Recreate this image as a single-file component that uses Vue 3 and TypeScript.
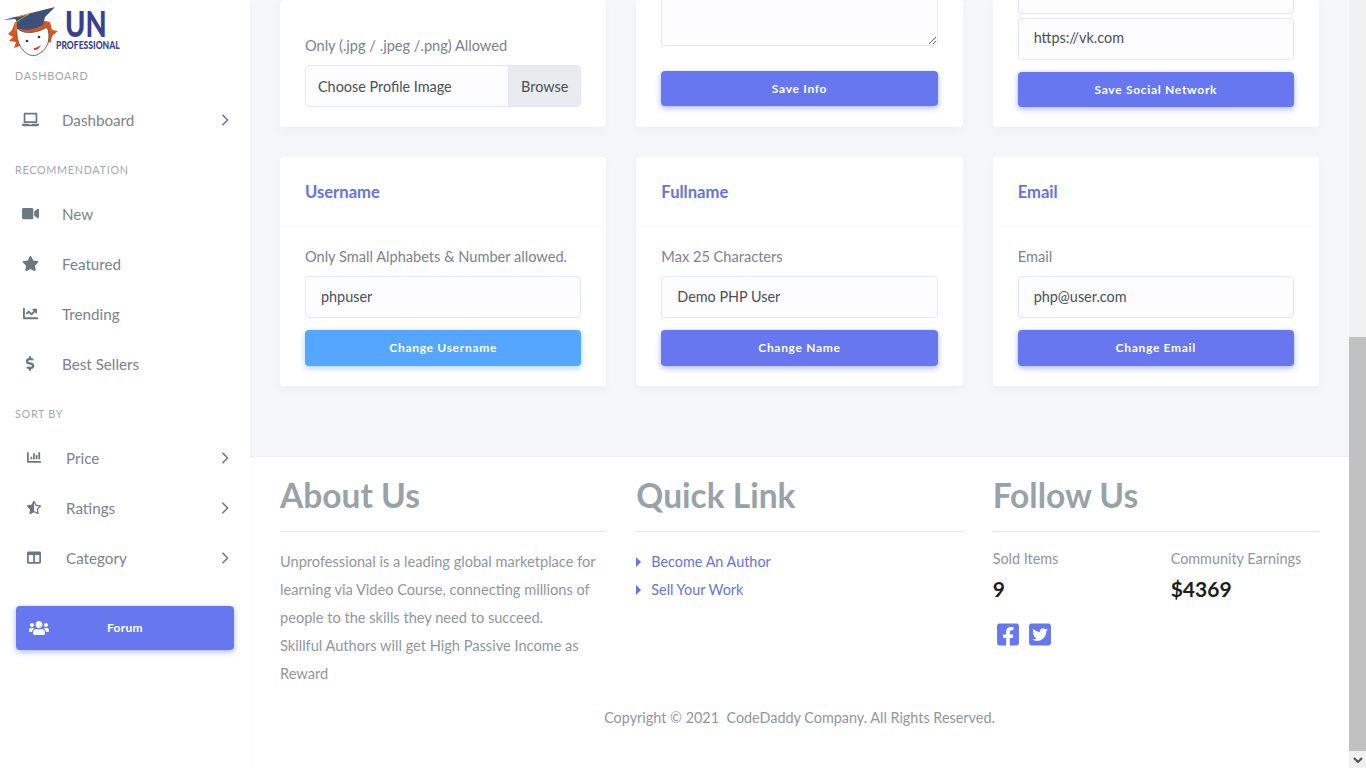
<template>
  <div class="page">
    <!-- sidebar -->
    <aside class="sidebar">
      <div class="logo">
        <svg class="logo-mascot" viewBox="0 0 62 58" width="62" height="58">
          <path d="M8 34 L12 30 L15 22 L40 20 L50 22 L52 30 L58 31 L52 36 L51 42 L44 44 L20 46 L14 48 L16 42 L9 41 L13 37Z" fill="#d9541e" />
          <path d="M17 28 C24 36 40 32 47 27 C51 36 49 48 40 53 C35 57 29 56 25 52 C19 47 16 38 17 28Z" fill="#fff" stroke="#5b4a44" stroke-width="0.8" />
          <path d="M3 20 L55 7 L45 17 L43 25 C34 30 24 31 17 28 L16 20 L15 19Z" fill="#3d5078" />
          <path d="M17 17 L29 14 L16 22 L16 31" fill="none" stroke="#d9b83a" stroke-width="0.8" />
          <circle cx="27" cy="41" r="1.3" fill="#333" />
          <circle cx="39" cy="37" r="1.3" fill="#333" />
          <path d="M34 50 C37 50 40 48 41 45 C39 46 36 48 34 48Z" fill="#c9402a" />
        </svg>
        <div class="logo-text">
          <span class="logo-un">UN</span>
          <span class="logo-pro">PROFESSIONAL</span>
        </div>
      </div>

      <div class="nav-head first">DASHBOARD</div>
      <a class="nav-item"><svg class="ico" viewBox="0 0 640 512"><path :d="icons.laptop" /></svg><span>Dashboard</span><svg class="chev" viewBox="0 0 8 14"><path d="M1 1l6 6-6 6" /></svg></a>

      <div class="nav-head">RECOMMENDATION</div>
      <a class="nav-item"><svg class="ico" viewBox="0 0 576 512"><path :d="icons.video" /></svg><span>New</span></a>
      <a class="nav-item"><svg class="ico" viewBox="0 0 576 512"><path :d="icons.star" /></svg><span>Featured</span></a>
      <a class="nav-item"><svg class="ico" viewBox="0 0 512 512"><path :d="icons.trend" /></svg><span>Trending</span></a>
      <a class="nav-item"><svg class="ico" viewBox="0 0 320 512"><path :d="icons.dollar" /></svg><span>Best Sellers</span></a>

      <div class="nav-head">SORT BY</div>
      <a class="nav-item sub"><svg class="ico" viewBox="0 0 512 512"><path :d="icons.bars" /></svg><span>Price</span><svg class="chev" viewBox="0 0 8 14"><path d="M1 1l6 6-6 6" /></svg></a>
      <a class="nav-item sub"><svg class="ico" viewBox="0 0 536 512"><path :d="icons.starHalf" /></svg><span>Ratings</span><svg class="chev" viewBox="0 0 8 14"><path d="M1 1l6 6-6 6" /></svg></a>
      <a class="nav-item sub"><svg class="ico" viewBox="0 0 512 512"><path :d="icons.columns" /></svg><span>Category</span><svg class="chev" viewBox="0 0 8 14"><path d="M1 1l6 6-6 6" /></svg></a>

      <a class="forum"><svg viewBox="0 0 640 512" width="20" height="16"><path :d="icons.users" /></svg><span>Forum</span></a>
    </aside>

    <main class="main">
      <section class="cards top">
        <div class="card">
          <div class="card-body">
            <label>Only (.jpg / .jpeg /.png) Allowed</label>
            <div class="file-input"><span>Choose Profile Image</span><b>Browse</b></div>
          </div>
        </div>
        <div class="card">
          <div class="card-body">
            <textarea class="area"></textarea>
            <button class="btn save-info">Save Info</button>
          </div>
        </div>
        <div class="card">
          <div class="card-body">
            <input class="field tight" />
            <input class="field" value="https://vk.com" />
            <button class="btn">Save Social Network</button>
          </div>
        </div>
      </section>

      <section class="cards">
        <div v-for="c in forms" :key="c.title" class="card">
          <h3 class="card-title">{{ c.title }}</h3>
          <div class="card-body">
            <label>{{ c.label }}</label>
            <input class="field" :value="c.value" />
            <button class="btn" :class="{ light: c.light }">{{ c.action }}</button>
          </div>
        </div>
      </section>

      <footer class="footer">
        <div class="foot-cols">
          <div>
            <h2>About Us</h2>
            <p>Unprofessional is a leading global marketplace for learning via Video Course, connecting millions of people to the skills they need to succeed.<br />Skillful Authors will get High Passive Income as Reward</p>
          </div>
          <div>
            <h2>Quick Link</h2>
            <ul>
              <li>Become An Author</li>
              <li>Sell Your Work</li>
            </ul>
          </div>
          <div>
            <h2>Follow Us</h2>
            <div class="stats">
              <div><small>Sold Items</small><strong>9</strong></div>
              <div><small>Community Earnings</small><strong>$4369</strong></div>
            </div>
            <div class="social-links">
              <svg viewBox="0 0 448 512" width="22" height="25"><path :d="icons.fb" /></svg>
              <svg viewBox="0 0 448 512" width="22" height="25"><path :d="icons.tw" /></svg>
            </div>
          </div>
        </div>
        <div class="copy">Copyright © 2021&nbsp; CodeDaddy Company. All Rights Reserved.</div>
      </footer>
    </main>

    <div class="scrollbar">
      <div class="track"></div>
      <div class="thumb"></div>
      <div class="arrow"><svg viewBox="0 0 10 6" width="10" height="6"><path d="M1 1l4 4 4-4" /></svg></div>
    </div>
  </div>
</template>

<script setup lang="ts">
interface FormCard {
  title: string
  label: string
  value: string
  action: string
  light?: boolean
}

const forms: FormCard[] = [
  { title: 'Username', label: 'Only Small Alphabets & Number allowed.', value: 'phpuser', action: 'Change Username', light: true },
  { title: 'Fullname', label: 'Max 25 Characters', value: 'Demo PHP User', action: 'Change Name' },
  { title: 'Email', label: 'Email', value: 'php@user.com', action: 'Change Email' }
]

const icons = {
  laptop: 'M624 416H381.54c-.74 19.81-14.71 32-32.74 32H288c-18.69 0-33.02-17.47-32.77-32H16c-8.8 0-16 7.2-16 16v16c0 35.2 28.8 64 64 64h512c35.2 0 64-28.8 64-64v-16c0-8.8-7.2-16-16-16zM576 48c0-26.4-21.6-48-48-48H112C85.6 0 64 21.6 64 48v336h512V48zm-64 272H128V64h384v256z',
  video: 'M336.2 64H47.8C21.4 64 0 85.4 0 111.8v288.4C0 426.6 21.4 448 47.8 448h288.4c26.4 0 47.8-21.4 47.8-47.8V111.8c0-26.4-21.4-47.8-47.8-47.8zm189.4 37.7L416 177.3v157.4l109.6 75.5c21.2 14.6 50.4-.3 50.4-25.8V127.5c0-25.4-29.1-40.4-50.4-25.8z',
  star: 'M259.3 17.8L194 150.2 47.9 171.5c-26.2 3.8-36.7 36.1-17.7 54.6l105.7 103-25 145.5c-4.5 26.3 23.2 46 46.4 33.7L288 439.6l130.7 68.7c23.2 12.2 50.9-7.4 46.4-33.7l-25-145.5 105.7-103c19-18.5 8.5-50.8-17.7-54.6L382 150.2 316.7 17.8c-11.7-23.6-45.6-23.9-57.4 0z',
  trend: 'M496 384H64V80c0-8.84-7.16-16-16-16H16C7.16 64 0 71.16 0 80v336c0 17.67 14.33 32 32 32h464c8.84 0 16-7.16 16-16v-32c0-8.84-7.16-16-16-16zM464 96H345.94c-21.38 0-32.09 25.85-16.97 40.97l32.4 32.4L288 242.75l-73.37-73.37c-12.5-12.5-32.76-12.5-45.25 0l-68.69 68.69c-6.25 6.25-6.25 16.38 0 22.63l22.62 22.62c6.25 6.25 16.38 6.25 22.63 0L192 237.25l73.37 73.37c12.5 12.5 32.76 12.5 45.25 0l96-96 32.4 32.4c15.12 15.12 40.97 4.41 40.97-16.97V112c.01-8.84-7.15-16-15.99-16z',
  dollar: 'M209.2 233.4l-108-31.6C88.7 198.2 80 186.5 80 173.5c0-16.3 13.2-29.5 29.5-29.5h66.3c12.2 0 24.2 3.7 34.2 10.5 6.1 4.1 14.3 3.1 19.5-2l34.8-34c7.1-6.9 6.1-18.4-1.8-24.5C238 74.8 207.4 65.1 176 64V16c0-8.8-7.2-16-16-16h-32c-8.8 0-16 7.2-16 16v48h-2.5C45.8 64-5.4 118.7.5 183.6c4.2 46.1 39.4 83.6 83.8 96.6l102.5 30c12.5 3.7 21.2 15.3 21.2 28.3 0 16.3-13.2 29.5-29.5 29.5h-66.3C100 368 88 364.3 78 357.5c-6.1-4.1-14.3-3.1-19.5 2l-34.8 34c-7.1 6.9-6.1 18.4 1.8 24.5 24.5 19.2 55.1 28.9 86.5 30v48c0 8.8 7.2 16 16 16h32c8.8 0 16-7.2 16-16v-48.2c46.6-.9 90.3-28.6 105.7-72.7 21.5-61.6-14.6-124.8-72.5-141.7z',
  bars: 'M332.8 320h38.4c6.4 0 12.8-6.4 12.8-12.8V172.8c0-6.4-6.4-12.8-12.8-12.8h-38.4c-6.4 0-12.8 6.4-12.8 12.8v134.4c0 6.4 6.4 12.8 12.8 12.8zm96 0h38.4c6.4 0 12.8-6.4 12.8-12.8V76.8c0-6.4-6.4-12.8-12.8-12.8h-38.4c-6.4 0-12.8 6.4-12.8 12.8v230.4c0 6.4 6.4 12.8 12.8 12.8zm-288 0h38.4c6.4 0 12.8-6.4 12.8-12.8v-70.4c0-6.4-6.4-12.8-12.8-12.8h-38.4c-6.4 0-12.8 6.4-12.8 12.8v70.4c0 6.4 6.4 12.8 12.8 12.8zm96 0h38.4c6.4 0 12.8-6.4 12.8-12.8V108.8c0-6.4-6.4-12.8-12.8-12.8h-38.4c-6.4 0-12.8 6.4-12.8 12.8v198.4c0 6.4 6.4 12.8 12.8 12.8zM496 384H64V80c0-8.84-7.16-16-16-16H16C7.16 64 0 71.16 0 80v336c0 17.67 14.33 32 32 32h464c8.84 0 16-7.16 16-16v-32c0-8.84-7.16-16-16-16z',
  starHalf: 'M508.55 171.51L362.18 150.2 296.77 17.81C290.89 5.98 279.42 0 267.95 0c-11.4 0-22.79 5.9-28.69 17.81l-65.43 132.38-146.38 21.29c-26.25 3.8-36.77 36.09-17.74 54.59l105.89 103-25.06 145.48C86.98 495.33 103.57 512 122.15 512c4.93 0 10-1.17 14.87-3.75l130.95-68.68 130.94 68.7c4.86 2.55 9.92 3.71 14.83 3.71 18.6 0 35.22-16.61 31.66-37.4l-25.03-145.49 105.91-102.98c19.04-18.5 8.52-50.8-17.73-54.6zm-121.74 123.2l-18.12 17.62 4.28 24.88 19.52 113.45-102.13-53.59-22.38-11.74.03-317.19 51.03 103.29 11.18 22.63 25.01 3.64 114.23 16.63-82.65 80.38z',
  columns: 'M464 32H48C21.49 32 0 53.49 0 80v352c0 26.51 21.49 48 48 48h416c26.51 0 48-21.49 48-48V80c0-26.51-21.49-48-48-48zM224 416H64V160h160v256zm224 0H288V160h160v256z',
  users: 'M96 224c35.3 0 64-28.7 64-64s-28.7-64-64-64-64 28.7-64 64 28.7 64 64 64zm448 0c35.3 0 64-28.7 64-64s-28.7-64-64-64-64 28.7-64 64 28.7 64 64 64zm32 32h-64c-17.6 0-33.5 7.1-45.1 18.6 40.3 22.1 68.9 62 75.1 109.4h66c17.7 0 32-14.3 32-32v-32c0-35.3-28.7-64-64-64zm-256 0c61.9 0 112-50.1 112-112S381.9 32 320 32 208 82.1 208 144s50.1 112 112 112zm76.8 32h-8.3c-20.8 10-43.9 16-68.5 16s-47.6-6-68.5-16h-8.3C179.6 288 128 339.6 128 403.2V432c0 26.5 21.5 48 48 48h288c26.5 0 48-21.5 48-48v-28.8c0-63.6-51.6-115.2-115.2-115.2zm-223.7-13.4C161.5 263.1 145.6 256 128 256H64c-35.3 0-64 28.7-64 64v32c0 17.7 14.3 32 32 32h65.9c6.3-47.4 34.9-87.3 75.2-109.4z',
  fb: 'M400 32H48A48 48 0 0 0 0 80v352a48 48 0 0 0 48 48h137.25V327.69h-63V256h63v-54.64c0-62.15 37-96.48 93.67-96.48 27.14 0 55.52 4.84 55.52 4.84v61h-31.27c-30.81 0-40.42 19.12-40.42 38.73V256h68.78l-11 71.69h-57.78V480H400a48 48 0 0 0 48-48V80a48 48 0 0 0-48-48z',
  tw: 'M400 32H48C21.5 32 0 53.5 0 80v352c0 26.5 21.5 48 48 48h352c26.5 0 48-21.5 48-48V80c0-26.5-21.5-48-48-48zm-48.9 158.8c.2 2.8.2 5.7.2 8.5 0 86.7-66 186.6-186.6 186.6-37.2 0-71.7-10.8-100.7-29.4 5.3.6 10.4.8 15.8.8 30.7 0 58.9-10.4 81.4-28-28.8-.6-53-19.5-61.3-45.5 10.1 1.5 19.2 1.5 29.6-1.2-30-6.1-52.5-32.5-52.5-64.4v-.8c8.7 4.9 18.9 7.9 29.6 8.3a65.447 65.447 0 0 1-29.2-54.6c0-12.2 3.2-23.4 8.9-33.1 32.3 39.8 80.8 65.8 135.2 68.6-9.3-44.5 24-80.6 64-80.6 18.9 0 35.9 7.9 47.9 20.7 14.8-2.8 29-8.3 41.6-15.8-4.9 15.2-15.2 28-28.8 36.1 13.2-1.4 26-5.1 37.8-10.2-8.9 13.1-20.1 24.7-32.9 34z'
}
</script>

<style>
html,
body {
  margin: 0;
  height: 100%;
  overflow: hidden;
}
</style>

<style scoped>
.page {
  display: flex;
  height: 768px;
  overflow: hidden;
  font-family: 'Lato', 'Open Sans', sans-serif;
  background: #f4f6f9;
  color: #6c757d;
}

/* sidebar */
.sidebar {
  width: 250px;
  flex: none;
  background: #fff;
  box-sizing: border-box;
  display: flex;
  flex-direction: column;
  box-shadow: 0 4px 8px rgba(0, 0, 0, 0.03);
  z-index: 2;
}

.logo {
  height: 58px;
  display: flex;
  color: #3b3f94;
}

.logo-mascot {
  flex: none;
}

.logo-text {
  display: flex;
  flex-direction: column;
  margin-left: -6px;
}

.logo-un {
  font: 900 36px/28px 'Lato', sans-serif;
  margin: 9px 0 0 9px;
  transform: scaleX(0.76);
  transform-origin: left;
}

.logo-pro {
  font: 900 11px/10px 'Lato', sans-serif;
  margin-top: 3px;
  transform: scaleX(0.78);
  transform-origin: left;
}

.nav-head {
  font-size: 10.8px;
  line-height: 14px;
  letter-spacing: 0.7px;
  color: #a0a7ae;
  padding: 0 15px;
  margin-top: 18px;
  margin-bottom: 12px;
}

.nav-head.first {
  margin-top: 11px;
}

.nav-item {
  height: 50px;
  display: flex;
  align-items: center;
  padding-left: 22px;
  font-size: 15.2px;
  color: #7a838b;
}

.nav-item.sub {
  padding-left: 27px;
}

.nav-item span {
  flex: 1;
}

.ico {
  width: 17px;
  height: 15px;
  flex: none;
  margin-right: 23px;
  fill: #6a7884;
  margin-top: -2px;
}

.sub .ico {
  width: 14px;
  margin-right: 25px;
}

.chev {
  width: 8px;
  height: 12px;
  flex: none;
  margin-right: 21px;
  fill: none;
  stroke: #6c757d;
  stroke-width: 1.7;
}

.forum {
  margin: 23px 16px 0;
  height: 44px;
  box-sizing: border-box;
  border-radius: 4px;
  background: #6777ef;
  color: #fff;
  display: flex;
  align-items: center;
  padding: 0 13px 2px;
  font-size: 12px;
  font-weight: 700;
  letter-spacing: 0.3px;
  box-shadow: 0 2px 6px #acb5f6;
}

.forum svg {
  fill: #fff;
  margin-top: 2px;
}

.forum span {
  flex: 1;
  text-align: center;
  padding-right: 20px;
}

/* main */
.main {
  flex: 1;
  min-width: 0;
  display: flex;
  flex-direction: column;
}

.cards {
  display: grid;
  grid-template-columns: repeat(3, 1fr);
  gap: 30px;
  padding: 0 30px;
  margin-bottom: 30px;
}

.cards.top {
  grid-template-rows: 127px;
}

.card {
  background: #fff;
  border-radius: 3px;
  display: flex;
  flex-direction: column;
  min-height: 0;
  box-shadow: 0 4px 8px rgba(0, 0, 0, 0.03);
}

.top .card {
  justify-content: flex-end;
}

.card-title {
  margin: 0;
  height: 70px;
  box-sizing: border-box;
  border-bottom: 1px solid #f9f9f9;
  padding: 0 25px;
  display: flex;
  align-items: center;
  font-size: 16.6px;
  font-weight: 700;
  color: #6674dc;
}

.card-body {
  padding: 21px 25px 20px;
  display: flex;
  flex-direction: column;
  flex: none;
}

.top .card-body {
  padding-top: 0;
}

label {
  font-size: 14.6px;
  line-height: 18px;
  margin-bottom: 10px;
  color: #7a838b;
}

.field {
  height: 42px;
  flex: none;
  box-sizing: border-box;
  border: 1px solid #e4e6fc;
  border-radius: 4px;
  background: #fdfdff;
  padding: 0 15px 2px;
  font: 14.4px 'Lato', sans-serif;
  color: #495057;
  width: 100%;
  outline: none;
}

.top .field {
  padding-bottom: 4px;
}

.field.tight {
  margin-bottom: 4px;
}

.file-input {
  height: 42px;
  box-sizing: border-box;
  border: 1px solid #e4e6fc;
  border-radius: 4px;
  background: #fdfdff;
  display: flex;
  align-items: center;
  justify-content: space-between;
  padding-left: 12px;
  font-size: 14.4px;
  color: #495057;
  overflow: hidden;
}

.file-input b {
  font-weight: 400;
  align-self: stretch;
  display: flex;
  align-items: center;
  padding: 0 12px;
  background: #e9ecef;
  border-left: 1px solid #e4e6fc;
}

.area {
  height: 170px;
  flex: none;
  box-sizing: border-box;
  width: 100%;
  border: 1px solid #e4e6fc;
  border-radius: 4px;
  background: #fdfdff;
  margin-bottom: 25px;
  display: block;
  outline: none;
}

.btn {
  height: 36px;
  flex: none;
  margin-top: 12px;
  padding: 0 0 2px;
  border: 0;
  border-radius: 4px;
  background: #6777ef;
  color: #fff;
  font: 700 12px 'Lato', sans-serif;
  letter-spacing: 0.7px;
  box-shadow: 0 2px 6px #acb5f6;
}

.top .btn {
  height: 35px;
  padding: 0;
}

.btn.save-info {
  margin: 0 0 1px;
}

.btn.light {
  background: #54a6ff;
  box-shadow: 0 2px 6px #a9d2ff;
}

/* footer */
.footer {
  flex: 1;
  background: #fff;
  border-top: 1px solid #eceef3;
  margin-top: 40px;
  padding: 0 30px;
}

.foot-cols {
  display: grid;
  grid-template-columns: repeat(3, 1fr);
  gap: 30px;
}

h2 {
  margin: 0 0 16px;
  height: 75px;
  box-sizing: border-box;
  padding-top: 18px;
  border-bottom: 1px solid #e3e5ea;
  font-size: 33.5px;
  line-height: 40px;
  font-weight: 700;
  color: #98a2a9;
}

p {
  margin: 0;
  font-size: 14.6px;
  line-height: 28px;
  color: #8f979e;
}

ul {
  list-style: none;
  margin: 0;
  padding: 0;
}

li {
  font-size: 14.4px;
  line-height: 28px;
  color: #6674dc;
  padding-left: 15px;
  position: relative;
}

li::before {
  content: '';
  position: absolute;
  left: 0;
  top: 9px;
  border-left: 5px solid #6674dc;
  border-top: 5px solid transparent;
  border-bottom: 5px solid transparent;
}

.stats {
  display: grid;
  grid-template-columns: 178px 1fr;
}

.stats small {
  display: block;
  font-size: 14.4px;
  line-height: 20px;
  padding-top: 1px;
  margin-bottom: 3px;
  color: #8f979e;
}

.stats strong {
  display: block;
  font-size: 21px;
  line-height: 34px;
  color: #191d21;
  font-weight: 700;
}

.social-links {
  display: flex;
  gap: 10px;
  padding: 16px 0 0 4px;
  fill: #6777ef;
}

.copy {
  text-align: center;
  font-size: 14.4px;
  color: #8f979e;
  margin-top: 21px;
}

/* scrollbar */
.scrollbar {
  width: 17px;
  flex: none;
  background: #f1f1f1;
  display: flex;
  flex-direction: column;
  z-index: 3;
}

.track {
  height: 337px;
}

.thumb {
  flex: 1;
  background: #c1c1c1;
}

.arrow {
  height: 17px;
  display: flex;
  align-items: center;
  justify-content: center;
}

.arrow svg {
  fill: none;
  stroke: #505050;
  stroke-width: 2;
}
</style>
